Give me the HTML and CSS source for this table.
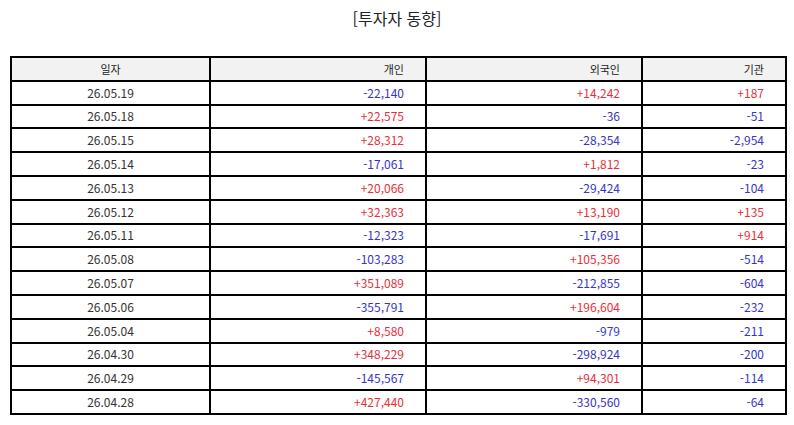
FILE: index.html
```html
<!DOCTYPE html>
<html lang="ko">
<head>
<meta charset="utf-8">
<link rel="stylesheet" href="styles.css">
</head>
<body>
<div class="page">
  <h1 class="title">[투자자 동향]</h1>
  <table class="grid">
    <thead>
      <tr><th class="date">일자</th><th>개인</th><th>외국인</th><th>기관</th></tr>
    </thead>
    <tbody>
      <tr><td class="date">26.05.19</td><td class="dn">-22,140</td><td class="up">+14,242</td><td class="up">+187</td></tr>
      <tr><td class="date">26.05.18</td><td class="up">+22,575</td><td class="dn">-36</td><td class="dn">-51</td></tr>
      <tr><td class="date">26.05.15</td><td class="up">+28,312</td><td class="dn">-28,354</td><td class="dn">-2,954</td></tr>
      <tr><td class="date">26.05.14</td><td class="dn">-17,061</td><td class="up">+1,812</td><td class="dn">-23</td></tr>
      <tr><td class="date">26.05.13</td><td class="up">+20,066</td><td class="dn">-29,424</td><td class="dn">-104</td></tr>
      <tr><td class="date">26.05.12</td><td class="up">+32,363</td><td class="up">+13,190</td><td class="up">+135</td></tr>
      <tr><td class="date">26.05.11</td><td class="dn">-12,323</td><td class="dn">-17,691</td><td class="up">+914</td></tr>
      <tr><td class="date">26.05.08</td><td class="dn">-103,283</td><td class="up">+105,356</td><td class="dn">-514</td></tr>
      <tr><td class="date">26.05.07</td><td class="up">+351,089</td><td class="dn">-212,855</td><td class="dn">-604</td></tr>
      <tr><td class="date">26.05.06</td><td class="dn">-355,791</td><td class="up">+196,604</td><td class="dn">-232</td></tr>
      <tr><td class="date">26.05.04</td><td class="up">+8,580</td><td class="dn">-979</td><td class="dn">-211</td></tr>
      <tr><td class="date">26.04.30</td><td class="up">+348,229</td><td class="dn">-298,924</td><td class="dn">-200</td></tr>
      <tr><td class="date">26.04.29</td><td class="dn">-145,567</td><td class="up">+94,301</td><td class="dn">-114</td></tr>
      <tr><td class="date">26.04.28</td><td class="up">+427,440</td><td class="dn">-330,560</td><td class="dn">-64</td></tr>
    </tbody>
  </table>
</div>
</body>
</html>
```
FILE: styles.css
```css
html, body {
  margin: 0;
  padding: 0;
  background: #fff;
}
.page {
  padding: 0 10px;
  font-family: "Noto Sans CJK KR", "Noto Sans", sans-serif;
}
.title {
  margin: 0;
  padding-top: 6px;
  height: 56px;
  box-sizing: border-box;
  text-align: center;
  font-size: 16px;
  font-weight: normal;
  line-height: 24px;
  color: #222;
}
.grid {
  width: 775px;
  border-collapse: collapse;
  table-layout: fixed;
  font-size: 12px;
  color: #333;
}
.grid th, .grid td {
  border: 2px solid #000;
  height: 23.8px;
  padding: 0 21px 0 0;
  text-align: right;
  box-sizing: border-box;
  line-height: 14px;
}
.grid th {
  background: #f2f2f2;
  font-weight: normal;
  font-size: 11px;
  color: #222;
}
.grid th:nth-child(1) { width: 199px; }
.grid th:nth-child(2) { width: 216px; }
.grid th:nth-child(3) { width: 216px; }
.grid th:nth-child(4) { width: 144px; }
.grid .date {
  text-align: center;
  padding: 0;
}
.up { color: #e8303a; }
.dn { color: #3535c8; }
```
